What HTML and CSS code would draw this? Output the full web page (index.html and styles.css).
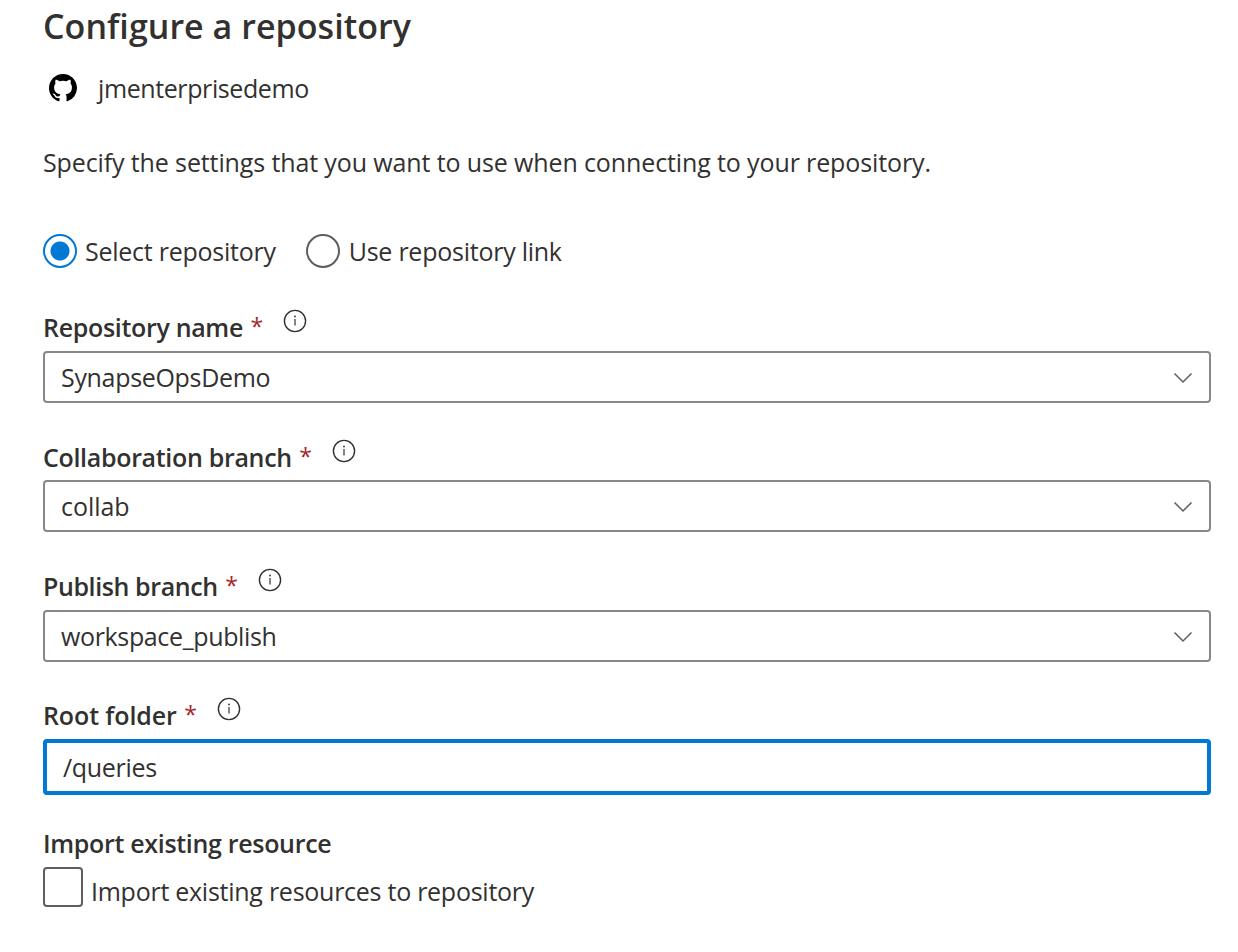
FILE: index.html
```html
<!DOCTYPE html>
<html lang="en">
<head>
<meta charset="utf-8">
<title>Configure a repository</title>
<link rel="stylesheet" href="styles.css">
</head>
<body>
<svg class="defs" width="0" height="0">
<symbol id="info" viewBox="0 0 24 24"><circle cx="12" cy="12" r="10.6" fill="none" stroke="#323130" stroke-width="1.4"/><path d="M12 10v6.500" stroke="#323130" stroke-width="1.200"/><circle cx="12" cy="7.5" r=".9" fill="#323130"/></symbol>
<symbol id="chevron" viewBox="0 0 20 12"><path d="M1.500 1.500L10 10l8.500-8.500" fill="none" stroke="#605e5c" stroke-width="1.500"/></symbol>
</svg>
<main class="panel">
<h1>Configure a repository</h1>
<div class="account"><svg class="github" viewBox="0 0 16 16"><path d="M8 0C3.580 0 0 3.580 0 8c0 3.540 2.290 6.530 5.470 7.590.4.070.55-.17.55-.38 0-.19-.01-.82-.01-1.490-2.010.37-2.530-.49-2.690-.94-.09-.23-.48-.94-.82-1.130-.28-.15-.68-.52-.01-.53.63-.01 1.080.58 1.230.82.72 1.210 1.870.87 2.330.66.07-.52.28-.87.51-1.070-1.780-.2-3.640-.89-3.640-3.950 0-.87.31-1.590.82-2.150-.08-.2-.36-1.020.08-2.120 0 0 .67-.21 2.200.82a7.500 7.500 0 014 0c1.530-1.040 2.200-.82 2.200-.82.44 1.100.16 1.920.08 2.120.51.56.82 1.270.82 2.150 0 3.070-1.870 3.750-3.650 3.950.29.25.54.73.54 1.480 0 1.070-.01 1.930-.01 2.200 0 .21.15.46.55.38A8.010 8.010 0 0016 8c0-4.420-3.580-8-8-8z"/></svg><span class="account-name">jmenterprisedemo</span></div>
<p class="intro">Specify the settings that you want to use when connecting to your repository.</p>
<div class="options"><div class="option"><i class="radio checked"></i><span>Select repository</span></div><div class="option link-option"><i class="radio"></i><span>Use repository link</span></div></div>
<section class="field"><div class="label"><b>Repository name</b><em>*</em><svg><use href="#info"/></svg></div><div class="select"><span>SynapseOpsDemo</span><svg><use href="#chevron"/></svg></div></section>
<section class="field"><div class="label"><b>Collaboration branch</b><em>*</em><svg><use href="#info"/></svg></div><div class="select"><span class="value-short">collab</span><svg><use href="#chevron"/></svg></div></section>
<section class="field"><div class="label"><b class="label-publish">Publish branch</b><em>*</em><svg><use href="#info"/></svg></div><div class="select"><span class="value-publish">workspace_publish</span><svg><use href="#chevron"/></svg></div></section>
<section class="field"><div class="label"><b class="label-root">Root folder</b><em>*</em><svg><use href="#info"/></svg></div><div class="select focused"><span>/queries</span></div></section>
<div class="import-title"><b>Import existing resource</b></div>
<div class="check-row"><i class="checkbox"></i><span class="check-label">Import existing resources to repository</span></div>
</main>
</body>
</html>
```
FILE: styles.css
```css
* { box-sizing: border-box; }
body { margin: 0; background: #fff; color: #323130; font: 25px/34px "Open Sans", "Noto Sans", sans-serif; }
.defs { position: absolute; }
.panel { width: 1211px; padding-left: 43px; white-space: nowrap; }
h1 { margin: 0; font-size: 34px; line-height: 46px; height: 50px; padding-top: 3px; font-weight: 600; letter-spacing: .04px; }
.account { display: flex; align-items: center; height: 76px; gap: 21px; padding-left: 6px; }
.github { width: 28px; height: 28px; }
.account-name { letter-spacing: -.4px; }
.intro { margin: 0; height: 108px; padding-top: 19px; letter-spacing: -.12px; }
.options { display: flex; height: 34px; gap: 30px; letter-spacing: -.25px; }
.option { display: flex; gap: 8px; }
.link-option { gap: 9px; }
.radio { width: 34px; height: 34px; border: 2px solid #605e5c; border-radius: 50%; }
.radio.checked { border-color: #0078d4; background: radial-gradient(circle, #0078d4 9px, #fff 10px); }
.field { height: 129.4px; padding-top: 41.3px; }
.label { display: flex; height: 41.7px; }
.label b { font-weight: 600; letter-spacing: -.32px; padding-top: 1px; }
.label .label-publish { letter-spacing: -.4px; }
.label .label-root { letter-spacing: -.1px; }
.label em { color: #a4262c; font-style: normal; font-size: 23px; width: 12px; margin-left: 7.5px; }
.label svg { width: 24px; height: 24px; margin-left: 20.7px; }
.select { height: 52px; border: 2px solid #8a8886; border-radius: 4px; display: flex; align-items: center; justify-content: space-between; padding: 0 16px; letter-spacing: -.32px; }
.select svg { width: 20px; height: 12px; margin-top: 2px; }
.value-short { letter-spacing: -.05px; }
.value-publish { letter-spacing: -.36px; }
.focused { height: 56px; border: 4px solid #0078d4; }
.import-title { height: 81.4px; padding-top: 40px; letter-spacing: -.32px; }
.import-title b { font-weight: 600; }
.check-row { display: flex; gap: 8px; letter-spacing: -.26px; }
.checkbox { width: 40px; height: 40px; border: 2px solid #605e5c; border-radius: 4px; }
.check-label { padding-top: 7px; }
```
